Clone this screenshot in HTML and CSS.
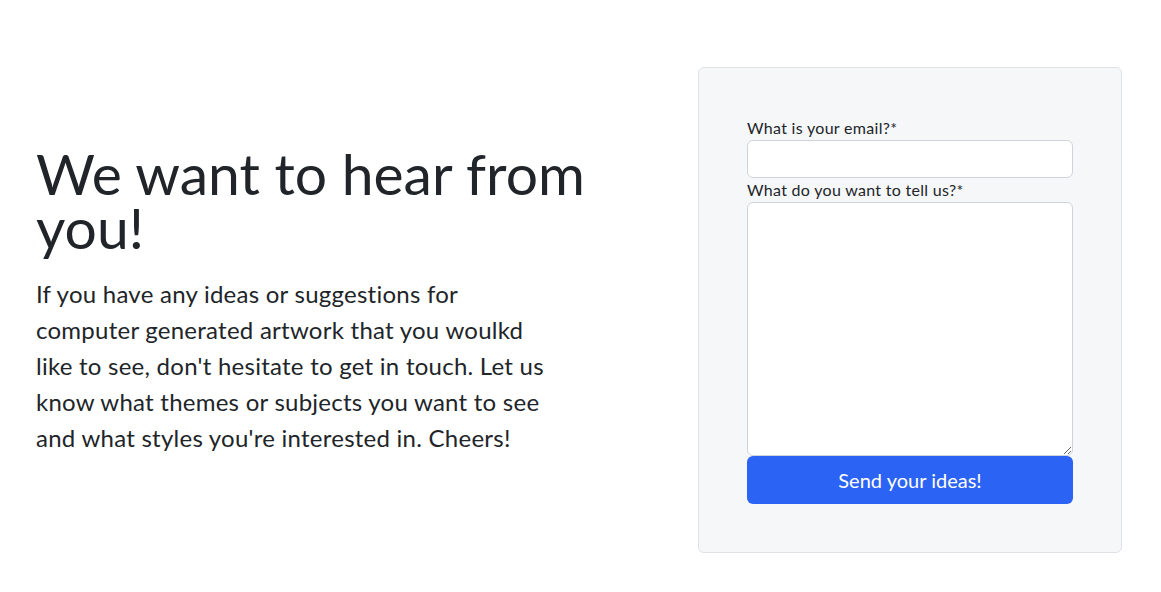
FILE: index.html
```html
<!DOCTYPE html>
<html lang="en">
<head>
<meta charset="utf-8">
<title>Contact</title>
<link rel="stylesheet" href="styles.css">
</head>
<body>
<main class="page">
  <section class="intro">
    <h1 class="title">We want to hear from you!</h1>
    <p class="lead">If you have any ideas or suggestions for computer generated artwork that you woulkd like to see, don't hesitate to get in touch. Let us know what themes or subjects you want to see and what styles you're interested in. Cheers!</p>
  </section>
  <form class="card">
    <label class="label" for="email">What is your email?*</label>
    <input class="input" id="email" type="email">
    <label class="label" for="msg">What do you want to tell us?*</label>
    <textarea class="textarea" id="msg"></textarea>
    <button class="button" type="button">Send your ideas!</button>
  </form>
</main>
</body>
</html>
```

FILE: styles.css
```css
* { box-sizing: border-box; }
html, body { margin: 0; padding: 0; background: #fff; }
body {
  font-family: Lato, "Noto Sans", "Liberation Sans", sans-serif;
  color: #212529;
}
.page {
  display: flex;
  justify-content: space-between;
  align-items: flex-start;
  padding: 67px 39px 40px 36px;
}
.intro {
  width: 600px;
  padding-top: 79px;
}
.title {
  margin: 0;
  font-size: 57px;
  line-height: 54px;
  font-weight: 400;
}
.lead {
  margin: 22px 0 0;
  max-width: 515px;
  font-size: 24px;
  line-height: 36px;
  letter-spacing: 0.25px;
}
.card {
  width: 424px;
  display: flex;
  flex-direction: column;
  padding: 48px;
  background: #f6f7f9;
  border: 1px solid #dee2e6;
  border-radius: 6px;
}
.label {
  font-size: 16px;
  line-height: 24px;
  letter-spacing: 0.3px;
}
.input {
  height: 38px;
  border: 1px solid #ced4da;
  border-radius: 6px;
  background: #fff;
}
.textarea {
  height: 254px;
  border: 1px solid #ced4da;
  border-radius: 6px;
  background: #fff;
  resize: vertical;
}
.button {
  height: 48px;
  border: 0;
  border-radius: 6px;
  background: #2b63f5;
  color: #fff;
  font-family: inherit;
  font-size: 20px;
}
```
